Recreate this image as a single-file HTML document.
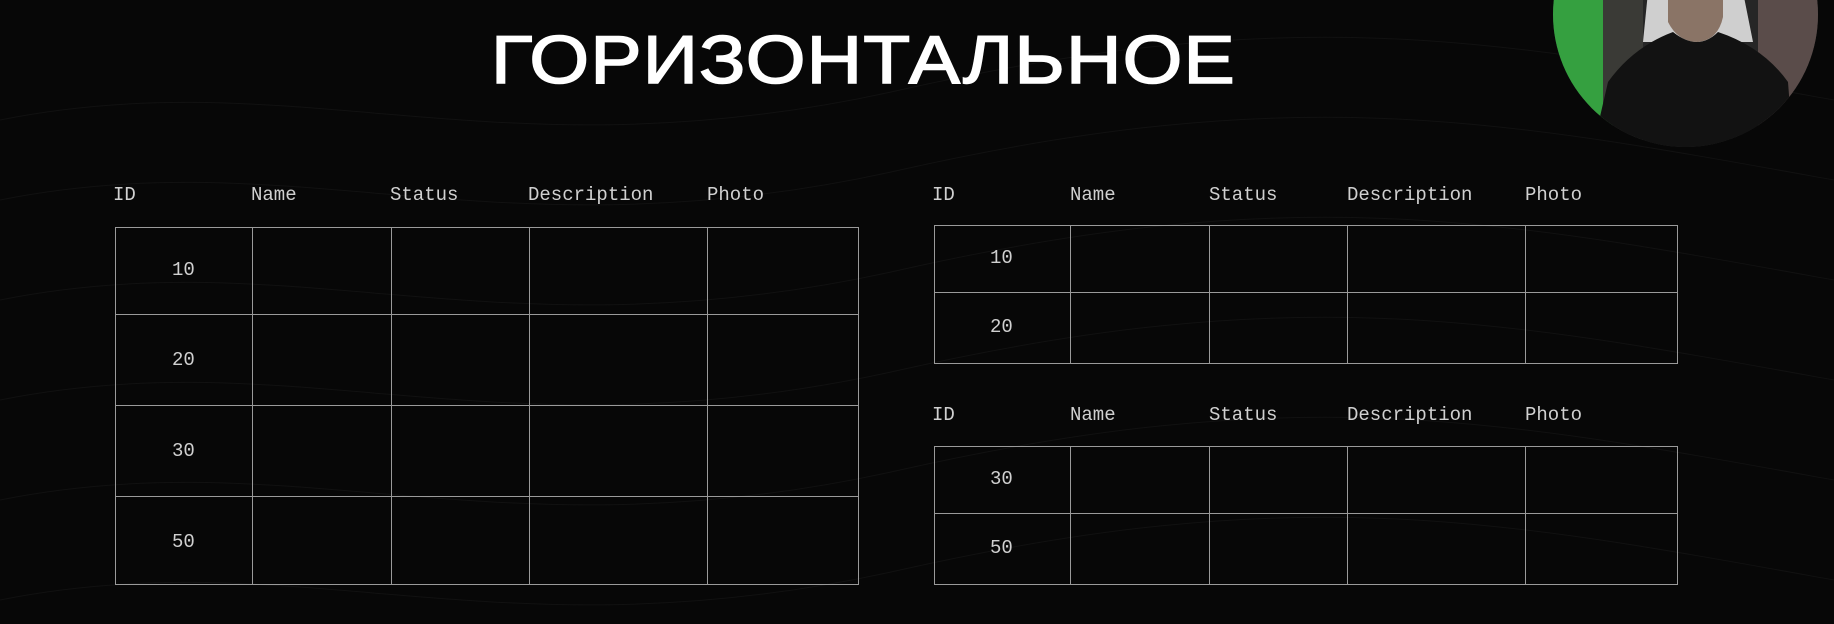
<!DOCTYPE html>
<html><head><meta charset="utf-8"><style>
html,body{margin:0;padding:0;background:#070707;}
body{width:1834px;height:624px;position:relative;overflow:hidden;font-family:"Liberation Mono",monospace;color:#d0d0d0;}
.t{position:absolute;font-size:19px;line-height:20px;white-space:nowrap;}
.h{position:absolute;background:#9a9a9a;height:1px;}
.v{position:absolute;background:#9a9a9a;width:1px;}
.title{position:absolute;left:491px;top:25px;font-family:"Liberation Sans",sans-serif;font-weight:normal;font-size:68px;line-height:70px;color:#fff;-webkit-text-stroke:1.5px #fff;transform-origin:0 0;transform:scaleX(1.13);white-space:nowrap;letter-spacing:1px;}
.cam{position:absolute;left:1553px;top:-118px;width:265px;height:265px;border-radius:50%;overflow:hidden;background:#1b1b1b;}
</style></head><body>
<svg width="1834" height="624" style="position:absolute;left:0;top:0" fill="none" stroke="#111" stroke-width="1">
<path d="M0 120 C300 60 500 180 900 90 S1500 40 1834 100"/>
<path d="M0 200 C300 140 500 260 900 170 S1500 120 1834 180"/>
<path d="M0 300 C300 240 500 360 900 270 S1500 220 1834 280"/>
<path d="M0 400 C300 340 500 460 900 370 S1500 320 1834 380"/>
<path d="M0 500 C300 440 500 560 900 470 S1500 420 1834 480"/>
<path d="M0 600 C300 540 500 660 900 570 S1500 520 1834 580"/>
</svg>
<div class="title">ГОРИЗОНТАЛЬНОЕ</div>
<div class="cam">
<svg width="265" height="265" viewBox="0 0 265 265">
<rect width="265" height="265" fill="#262626"/>
<rect x="0" y="110" width="60" height="155" fill="#35a040"/>
<rect x="50" y="110" width="40" height="155" fill="#3a3a36"/>
<rect x="205" y="110" width="60" height="155" fill="#5a4c4a"/>
<path d="M95 110 L90 160 L200 160 L190 110Z" fill="#cfcfcf"/>
<path d="M115 110 L115 140 Q125 160 145 160 Q165 158 170 135 L170 110Z" fill="#8a7466"/>
<path d="M40 265 L55 200 Q80 165 120 150 Q145 170 165 150 Q210 165 235 200 L240 265Z" fill="#121212"/>
</svg>
</div>

<div class="t" style="left:113px;top:185px">ID</div>
<div class="t" style="left:251px;top:185px">Name</div>
<div class="t" style="left:390px;top:185px">Status</div>
<div class="t" style="left:528px;top:185px">Description</div>
<div class="t" style="left:707px;top:185px">Photo</div>
<div class="h" style="left:115px;top:227px;width:744px"></div>
<div class="h" style="left:115px;top:314px;width:744px"></div>
<div class="h" style="left:115px;top:405px;width:744px"></div>
<div class="h" style="left:115px;top:496px;width:744px"></div>
<div class="h" style="left:115px;top:584px;width:744px"></div>
<div class="v" style="left:115px;top:227px;height:358px"></div>
<div class="v" style="left:252px;top:227px;height:358px"></div>
<div class="v" style="left:391px;top:227px;height:358px"></div>
<div class="v" style="left:529px;top:227px;height:358px"></div>
<div class="v" style="left:707px;top:227px;height:358px"></div>
<div class="v" style="left:858px;top:227px;height:358px"></div>
<div class="t" style="left:172px;top:260px">10</div>
<div class="t" style="left:172px;top:350px">20</div>
<div class="t" style="left:172px;top:441px">30</div>
<div class="t" style="left:172px;top:532px">50</div>

<div class="t" style="left:932px;top:185px">ID</div>
<div class="t" style="left:1070px;top:185px">Name</div>
<div class="t" style="left:1209px;top:185px">Status</div>
<div class="t" style="left:1347px;top:185px">Description</div>
<div class="t" style="left:1525px;top:185px">Photo</div>
<div class="h" style="left:934px;top:225px;width:744px"></div>
<div class="h" style="left:934px;top:292px;width:744px"></div>
<div class="h" style="left:934px;top:363px;width:744px"></div>
<div class="v" style="left:934px;top:225px;height:139px"></div>
<div class="v" style="left:1070px;top:225px;height:139px"></div>
<div class="v" style="left:1209px;top:225px;height:139px"></div>
<div class="v" style="left:1347px;top:225px;height:139px"></div>
<div class="v" style="left:1525px;top:225px;height:139px"></div>
<div class="v" style="left:1677px;top:225px;height:139px"></div>
<div class="t" style="left:990px;top:248px">10</div>
<div class="t" style="left:990px;top:317px">20</div>

<div class="t" style="left:932px;top:405px">ID</div>
<div class="t" style="left:1070px;top:405px">Name</div>
<div class="t" style="left:1209px;top:405px">Status</div>
<div class="t" style="left:1347px;top:405px">Description</div>
<div class="t" style="left:1525px;top:405px">Photo</div>
<div class="h" style="left:934px;top:446px;width:744px"></div>
<div class="h" style="left:934px;top:513px;width:744px"></div>
<div class="h" style="left:934px;top:584px;width:744px"></div>
<div class="v" style="left:934px;top:446px;height:139px"></div>
<div class="v" style="left:1070px;top:446px;height:139px"></div>
<div class="v" style="left:1209px;top:446px;height:139px"></div>
<div class="v" style="left:1347px;top:446px;height:139px"></div>
<div class="v" style="left:1525px;top:446px;height:139px"></div>
<div class="v" style="left:1677px;top:446px;height:139px"></div>
<div class="t" style="left:990px;top:469px">30</div>
<div class="t" style="left:990px;top:538px">50</div>
</body></html>
